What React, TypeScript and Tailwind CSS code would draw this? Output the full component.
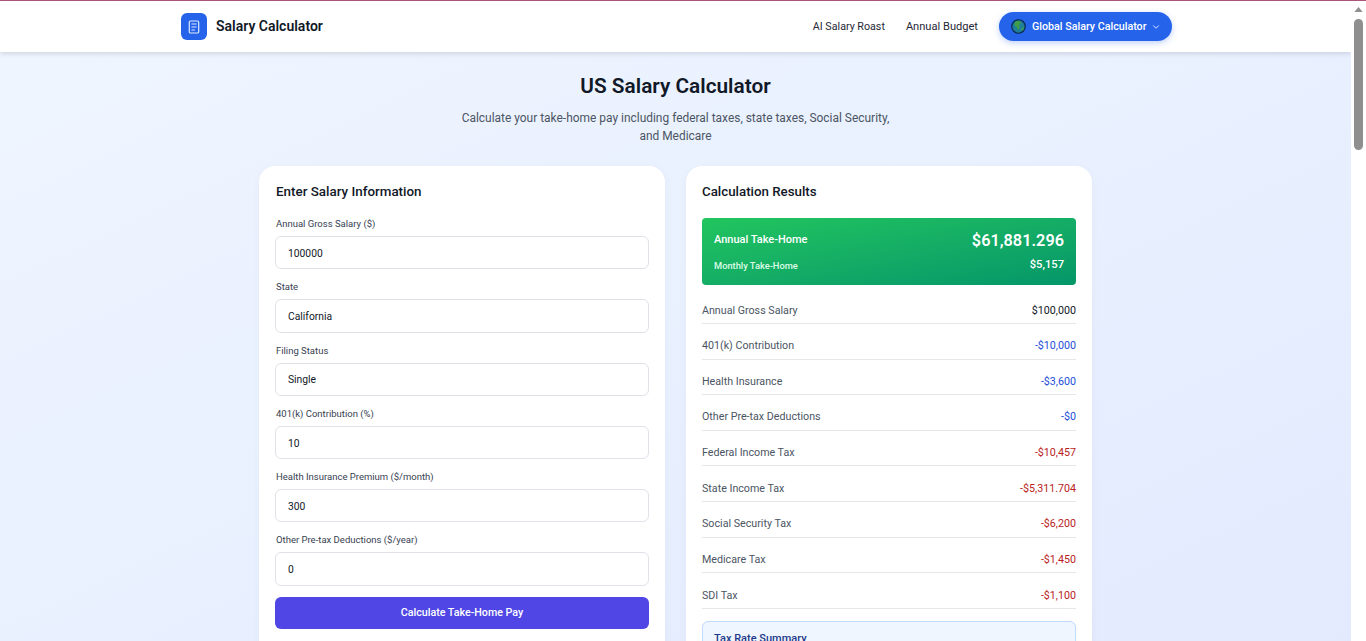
import { ChevronDown } from "lucide-react";

const fields = [
  { label: "Annual Gross Salary ($)", value: "100000" },
  { label: "State", value: "California" },
  { label: "Filing Status", value: "Single" },
  { label: "401(k) Contribution (%)", value: "10" },
  { label: "Health Insurance Premium ($/month)", value: "300" },
  { label: "Other Pre-tax Deductions ($/year)", value: "0" },
];

const rows = [
  { label: "Annual Gross Salary", value: "$100,000", color: "text-[#111827]" },
  { label: "401(k) Contribution", value: "-$10,000", color: "text-[#1d4ed8]" },
  { label: "Health Insurance", value: "-$3,600", color: "text-[#1d4ed8]" },
  { label: "Other Pre-tax Deductions", value: "-$0", color: "text-[#1d4ed8]" },
  { label: "Federal Income Tax", value: "-$10,457", color: "text-[#b91c1c]" },
  { label: "State Income Tax", value: "-$5,311.704", color: "text-[#b91c1c]" },
  { label: "Social Security Tax", value: "-$6,200", color: "text-[#b91c1c]" },
  { label: "Medicare Tax", value: "-$1,450", color: "text-[#b91c1c]" },
  { label: "SDI Tax", value: "-$1,100", color: "text-[#b91c1c]" },
];

function Globe() {
  return (
    <svg viewBox="0 0 16 16" className="h-[15px] w-[15px] shrink-0">
      <circle cx="8" cy="8" r="7.2" fill="#1f7f9b" stroke="#0b2a4a" strokeWidth="1.3" />
      <path d="M5 2.5c2-.8 4-.6 5.5.6.5 1.6-.6 2.4-1.7 3-.4 1.4.9 2 .4 3.5-.6 1.2-1.6 2-2.4 1.2-.6-1.3-.2-2.4-1.4-3-1.3-.4-2-1.4-1.6-2.8.3-.9.6-1.7 1.2-2.5z" fill="#3f9d4a" />
      <path d="M11.5 9.5c.8-.5 1.6-.4 2.2 0-.3 1.4-1 2.4-2.1 3.1-.6-1-.7-2.2-.1-3.1z" fill="#3f9d4a" />
    </svg>
  );
}

function Scrollbar() {
  return (
    <div className="flex w-[15px] shrink-0 flex-col items-center bg-white">
      <svg viewBox="0 0 10 6" className="mt-[6px] h-[5px] w-[9px]">
        <path d="M5 0l5 6H0z" fill="#8f8f8f" />
      </svg>
      <div className="mt-[7px] h-[131px] w-[9px] rounded-full bg-[#8f8f8f]" />
    </div>
  );
}

export default function App() {
  return (
    <div className="flex h-screen flex-col overflow-hidden font-['Roboto',sans-serif]">
      <div className="h-px shrink-0 bg-[#a8547c]" />
      <div className="flex min-h-0 flex-1">
        <div className="min-w-0 flex-1 overflow-hidden bg-gradient-to-br from-[#eff6ff] to-[#e3eafe]">
          <header className="relative h-[51px] bg-white shadow-[0_2px_5px_rgba(0,0,0,0.12)]">
            <div className="ml-[181px] flex h-full w-[991px] items-center justify-between">
              <div className="flex items-center gap-[9px]">
                <div className="flex h-[27px] w-[26px] items-center justify-center rounded-md bg-[#2563eb]">
                  <svg viewBox="0 0 14 16" className="h-[14px] w-[12px]" fill="none" stroke="#dbeafe" strokeWidth="1.4">
                    <rect x="1.5" y="1" width="11" height="14" rx="1.5" />
                    <path d="M4 4.5h6M4 8h6M4 11.5h4" />
                  </svg>
                </div>
                <span className="text-[14px] font-semibold text-[#111827]">Salary Calculator</span>
              </div>
              <nav className="flex items-center gap-[21px] text-[#1f2937]">
                <a className="pt-px text-[10.7px]">AI Salary Roast</a>
                <a className="pt-px text-[11.1px]">Annual Budget</a>
                <button className="flex h-[29px] w-[173px] items-center gap-[6px] rounded-full bg-[#2563eb] pl-[12px] text-[10.7px] font-medium text-white shadow-[0_2px_6px_rgba(37,99,235,0.3)]">
                  <Globe />
                  <span className="pt-px">Global Salary Calculator</span>
                  <ChevronDown className="-ml-[1px] h-[10px] w-[10px]" />
                </button>
              </nav>
            </div>
          </header>

          <main className="mx-auto w-[833px]">
            <div className="flex flex-col items-center pt-[21px]">
              <h1 className="text-[20.8px] font-semibold leading-[26px] text-[#111827]">US Salary Calculator</h1>
              <p className="mt-[10px] w-[440px] text-center text-[11.95px] leading-[18px] text-[#4b5563]">
                Calculate your take-home pay including federal taxes, state taxes, Social Security, and Medicare
              </p>
            </div>

            <div className="mt-[21px] grid grid-cols-2 gap-[21px]">
              <section className="rounded-2xl bg-white px-[16px] pb-[16px] pt-[17px] shadow-[0_2px_8px_rgba(0,0,0,0.04)]">
                <h2 className="pl-px text-[13.4px] font-medium leading-[18px] text-[#111827]">Enter Salary Information</h2>
                <div className="mt-[16px] flex flex-col gap-[11px]">
                  {fields.map((f) => (
                    <div key={f.label}>
                      <label className="block pl-px text-[9.5px] leading-[13px] text-[#374151]">{f.label}</label>
                      <input
                        readOnly
                        value={f.value}
                        className="mt-[6px] block h-[33.3px] w-full rounded-md border border-[#dfe2e7] bg-white px-[12px] pt-px text-[10.3px] text-[#111827]"
                      />
                    </div>
                  ))}
                </div>
                <button className="mt-[11px] h-[32px] w-full rounded-md bg-[#4f46e5] text-[10.7px] font-medium text-white">
                  Calculate Take-Home Pay
                </button>
              </section>

              <section className="rounded-2xl bg-white px-[16px] pb-[16px] pt-[17px] shadow-[0_2px_8px_rgba(0,0,0,0.04)]">
                <h2 className="text-[13.3px] font-medium leading-[18px] text-[#111827]">Calculation Results</h2>
                <div className="mt-[17px] rounded-sm bg-gradient-to-br from-[#22c55e] to-[#059669] px-[12px] pb-[11px] pt-[11px] text-white">
                  <div className="flex items-center justify-between">
                    <span className="-mt-[2px] text-[11px] font-medium">Annual Take-Home</span>
                    <span className="text-[16.3px] font-semibold">$61,881.296</span>
                  </div>
                  <div className="mt-[4px] flex items-center justify-between">
                    <span className="text-[9.3px] font-medium text-[#dcfce7]">Monthly Take-Home</span>
                    <span className="text-[11.2px] font-medium">$5,157</span>
                  </div>
                </div>
                <div className="mt-[3px]">
                  {rows.map((r) => (
                    <div key={r.label} className="flex h-[35.65px] items-center justify-between border-b border-[#e5e7eb] pt-[10px] text-[10.7px]">
                      <span className="text-[#4b5563]">{r.label}</span>
                      <span className={r.color}>{r.value}</span>
                    </div>
                  ))}
                </div>
                <div className="mt-[12px] rounded-md border border-[#bfdbfe] bg-[#eff6ff] px-[11px] py-[9px]">
                  <h3 className="text-[11px] font-medium text-[#1e3a8a]">Tax Rate Summary</h3>
                </div>
              </section>
            </div>
          </main>
        </div>
        <Scrollbar />
      </div>
    </div>
  );
}
